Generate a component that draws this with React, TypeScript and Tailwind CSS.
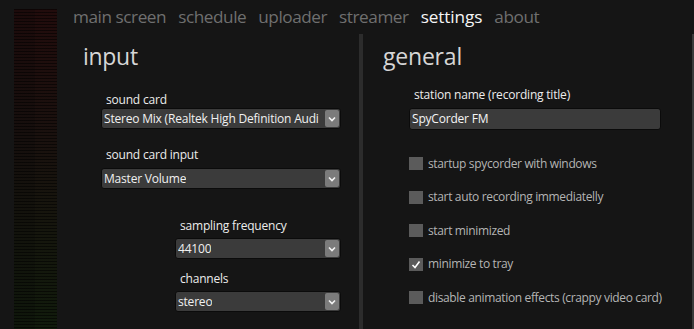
import React from "react";

const font = { fontFamily: '"Open Sans", "Noto Sans", sans-serif' };

function Chevron() {
  return (
    <span className="flex h-[17px] w-[14px] items-center justify-center rounded-[2px] bg-[#7b7b7b]">
      <svg width="8" height="6" viewBox="0 0 8 6">
        <path d="M1 1.5 L4 4.5 L7 1.5" stroke="#f2f2f2" strokeWidth="1.6" fill="none" />
      </svg>
    </span>
  );
}

function Select({ value, width }: { value: string; width: string }) {
  return (
    <div
      className={`flex h-[21px] ${width} items-center justify-between rounded-[3px] border border-[#0b0b0b] bg-[#3b3b3b] pl-[2px] pr-[1px]`}
    >
      <span className="truncate text-[12px] tracking-[-0.2px] text-[#f0f0f0]">{value}</span>
      <Chevron />
    </div>
  );
}

function Check({ label, checked }: { label: string; checked?: boolean }) {
  return (
    <div className="flex h-[33.5px] items-center gap-[5px]">
      <span className="flex h-[13px] w-[14px] items-center justify-center bg-[#5b5b5b]">
        {checked && (
          <svg width="10" height="9" viewBox="0 0 10 9">
            <path d="M1.5 5 L4 7.5 L8.5 1.5" stroke="#ffffff" strokeWidth="1.6" fill="none" />
          </svg>
        )}
      </span>
      <span className="text-[12px] tracking-[-0.35px] text-[#b4b4b4]">{label}</span>
    </div>
  );
}

const labelCls = "pl-[5px] text-[12px] leading-[16px] tracking-[-0.2px] text-[#ececec]";

export default function App() {
  const navItems = ["main screen", "schedule", "uploader", "streamer", "settings", "about"];
  return (
    <div style={font} className="flex h-[329px] w-[694px] overflow-hidden bg-[#151515]">
      {/* level meter */}
      <div className="ml-[14px] mt-[9px] flex w-[43px]">
        <div className="h-full w-[21px] bg-[repeating-linear-gradient(to_bottom,rgba(0,0,0,0.55)_0px,rgba(0,0,0,0.55)_1px,transparent_1px,transparent_3px),linear-gradient(to_bottom,#1d0b0b,#160f0d_40%,#0f170b)]" />
        <div className="h-full w-[22px] bg-[repeating-linear-gradient(to_bottom,rgba(0,0,0,0.55)_0px,rgba(0,0,0,0.55)_1px,transparent_1px,transparent_3px),linear-gradient(to_bottom,#220c0c,#1a110e_40%,#111b0c)]" />
      </div>

      <div className="flex flex-1 flex-col">
        {/* nav */}
        <div className="flex h-[34px] items-start gap-[12px] pl-[16px] pt-[4px] text-[17.2px] leading-[26px] tracking-[-0.45px]">
          {navItems.map((n) => (
            <span key={n} className={n === "settings" ? "text-[#f5f5f5] tracking-[-0.1px]" : "text-[#6f6f6f]"}>
              {n}
            </span>
          ))}
        </div>

        <div className="flex flex-1">
          {/* input panel */}
          <div className="w-[302px] pl-[26px]">
            <div className="mt-[7px] text-[23px] leading-[30px] tracking-[-0.3px] text-[#d6d6d6]">input</div>
            <div className="ml-[18px] mt-[21px] flex flex-col">
              <div className={labelCls}>sound card</div>
              <Select value="Stereo Mix (Realtek High Definition Audi" width="w-[240px]" />
              <div className={`mt-[18px] mb-[5px] ${labelCls}`}>sound card input</div>
              <Select value="Master Volume" width="w-[240px]" />
              <div className="ml-[74px] mt-[29px] flex flex-col">
                <div className={`mb-[4px] ${labelCls}`}>sampling frequency</div>
                <Select value="44100" width="w-[166px]" />
                <div className={`mt-[12px] mb-[4px] ${labelCls}`}>channels</div>
                <Select value="stereo" width="w-[166px]" />
              </div>
            </div>
          </div>

          {/* divider */}
          <div className="w-[4px] bg-[#2c2c2c]" />

          {/* general panel */}
          <div className="flex-1 pl-[20px]">
            <div className="mt-[7px] text-[23px] leading-[30px] tracking-[-0.2px] text-[#d6d6d6]">general</div>
            <div className="ml-[26px] mt-[16px] flex flex-col">
              <div className={`mb-[5px] ${labelCls} text-[#a8a8a8]`}>station name (recording title)</div>
              <div className="flex h-[22px] w-[252px] items-center rounded-[3px] border border-[#0b0b0b] bg-[#3b3b3b] pl-[2px]">
                <span className="text-[12px] tracking-[-0.2px] text-[#f5f5f5]">SpyCorder FM</span>
              </div>
              <div className="mt-[17px] flex flex-col">
                <Check label="startup spycorder with windows" />
                <Check label="start auto recording immediatelly" />
                <Check label="start minimized" />
                <Check label="minimize to tray" checked />
                <Check label="disable animation effects (crappy video card)" />
              </div>
            </div>
          </div>

          <div className="w-[2px] bg-[#3a3a3a]" />
        </div>
      </div>
    </div>
  );
}
